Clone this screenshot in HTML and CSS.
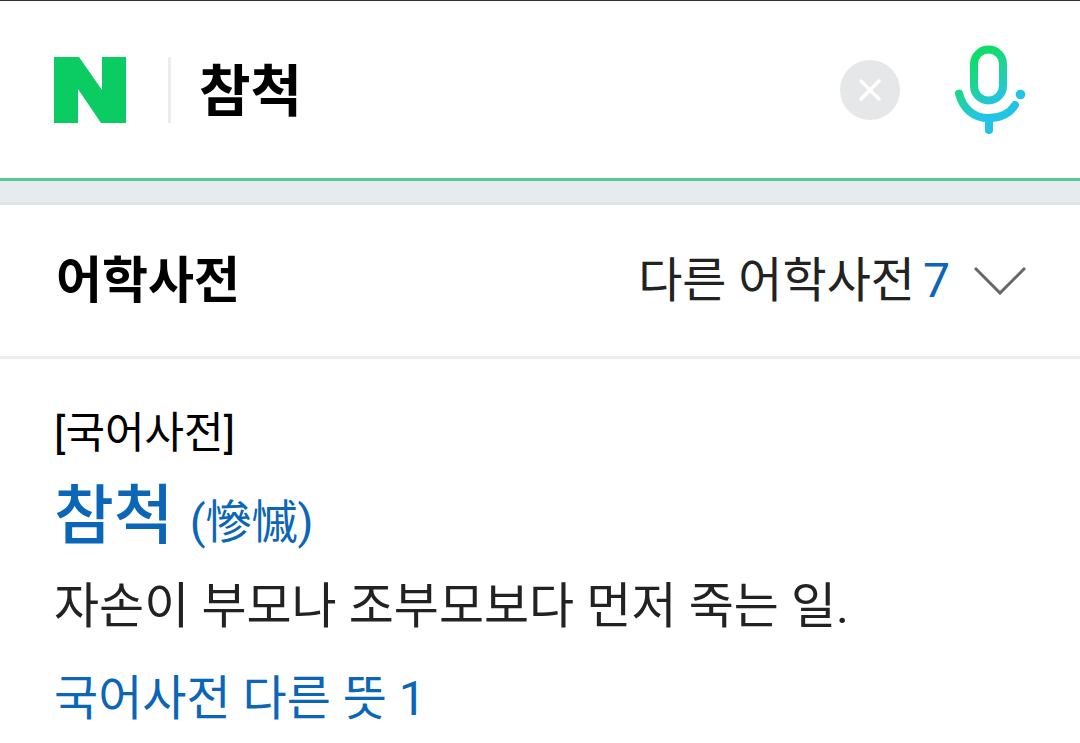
FILE: index.html
```html
<!DOCTYPE html>
<html lang="ko">
<head>
    <meta charset="UTF-8">
    <meta name="viewport" content="width=device-width, initial-scale=1.0">
    <title>참척</title>
    <link rel="stylesheet" href="styles.css">
</head>
<body>

    <header class="header">
        <form class="search-form" role="search">
            <a class="logo" href="#" aria-label="N">
                <svg width="72" height="66" viewBox="0 0 72 66" aria-hidden="true">
                    <path d="M0 0H25L48 33V0H72V66H47L24 32V66H0Z" fill="#0bcc62"/>
                </svg>
            </a>
            <input type="text" class="search-input" aria-label="검색어" value="참척">
            <button type="reset" class="icon-button" aria-label="지우기">
                <svg width="60" height="60" viewBox="0 0 60 60" aria-hidden="true">
                    <circle cx="30" cy="30" r="30" fill="#e6e7e9"/>
                    <path d="M21 21L39 39M39 21L21 39" fill="none" stroke="#fff" stroke-width="3.4" stroke-linecap="round"/>
                </svg>
            </button>
            <button type="button" class="icon-button" aria-label="음성 검색">
                <svg width="72" height="90" viewBox="0 0 72 90" aria-hidden="true">
                    <defs>
                        <linearGradient id="mic" gradientUnits="userSpaceOnUse" x1="18" y1="18" x2="46" y2="56">
                            <stop offset="0" stop-color="#0fdc6c"/>
                            <stop offset="0.45" stop-color="#1fd399"/>
                            <stop offset="1" stop-color="#22c4e6"/>
                        </linearGradient>
                    </defs>
                    <g fill="none" stroke="url(#mic)" stroke-width="8" stroke-linecap="round">
                        <rect x="20" y="4.5" width="29" height="51" rx="14.5"/>
                        <path d="M5 48.500C9 64 20 73 34.500 73C47 73 56 68 61 60"/>
                        <path d="M35 73V85"/>
                    </g>
                    <circle cx="66.500" cy="49.500" r="4.800" fill="#22c4e6"/>
                </svg>
            </button>
        </form>
    </header>

    <main class="section">
        <div class="section-header">
            <h2>어학사전</h2>
            <button type="button" class="other-button">
                <span>다른 어학사전</span>
                <span class="count">7</span>
                <svg class="arrow" width="52" height="28" viewBox="0 0 52 28" aria-hidden="true">
                    <path d="M1 1L26 26L51 1" fill="none" stroke="#666" stroke-width="3"/>
                </svg>
            </button>
        </div>

        <div class="entry">
            <p class="source">[국어사전]</p>
            <h3><a href="#">참척 <span class="hanja">(慘慽)</span></a></h3>
            <p class="meaning">자손이 부모나 조부모보다 먼저 죽는 일.</p>
            <a class="more" href="#">국어사전 다른 뜻 1</a>
        </div>
    </main>

</body>
</html>
```
FILE: styles.css
```css
* {
    box-sizing: border-box;
}

body {
    margin: 0;
    background: #fff;
    color: #222;
    font-family: Roboto, 'Noto Sans CJK KR', sans-serif;
    font-size: 48px;
    line-height: 76px;
}

h2, h3, p {
    margin: 0;
}

a {
    color: #0b66b7;
    text-decoration: none;
}

button {
    padding: 0;
    border: none;
    background: none;
    color: inherit;
    font: inherit;
    cursor: pointer;
}

svg {
    display: block;
}

/* Search bar */
.header {
    border-top: 1px solid #333;
    border-bottom: 3px solid #53ca90;
}

.search-form {
    display: flex;
    align-items: center;
    height: 177px;
    padding: 0 54px;
}

.search-input {
    flex: 1;
    min-width: 0;
    height: 66px;
    margin-left: 42px;
    padding: 0 0 6px 28px;
    border: none;
    border-left: 3px solid #ebedf2;
    outline: none;
    background: none;
    color: #000;
    font-family: inherit;
    font-size: 56px;
    font-weight: 700;
}

.icon-button + .icon-button {
    margin-left: 54px;
}

/* Dictionary section */
.section {
    border-top: 21px solid #e7ebee;
}

.section-header {
    display: flex;
    align-items: center;
    justify-content: space-between;
    height: 157px;
    padding: 0 54px 0 56px;
    border-top: 3px solid #e0e4e7;
    border-bottom: 3px solid #ebeef0;
}

.section-header h2 {
    color: #000;
    font-size: 50px;
    font-weight: 700;
}

.other-button {
    display: flex;
    align-items: center;
}

.count {
    margin-left: 8px;
    color: #0b66b7;
}

.arrow {
    margin-left: 24px;
}

.entry {
    padding: 42px 54px 12px;
}

.source {
    color: #000;
    font-size: 43px;
    line-height: 64px;
}

.entry h3 {
    font-size: 65px;
    font-weight: 500;
    line-height: 102px;
}

.hanja {
    font-size: 46px;
    font-weight: 400;
}

.meaning {
    font-size: 49px;
    line-height: 68px;
}

.more {
    display: block;
    margin-top: 20px;
}
```
